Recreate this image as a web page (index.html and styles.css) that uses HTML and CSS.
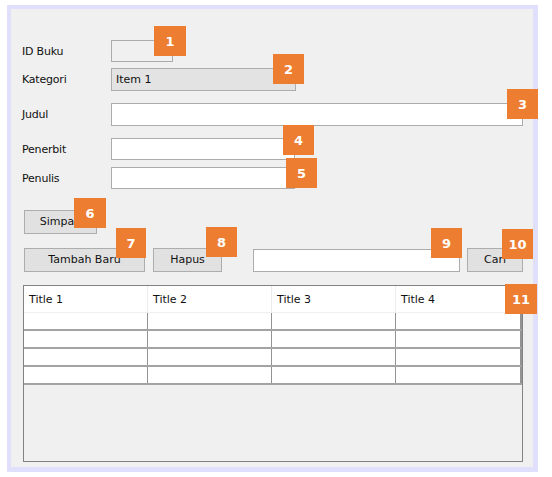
FILE: index.html
```html
<!DOCTYPE html>
<html>
<head>
<meta charset="utf-8">
<link rel="stylesheet" href="styles.css">
</head>
<body>
<div class="screen">
  <div class="frame">
    <div class="panel">
      <div class="form-row r-id">
        <span class="label">ID Buku</span>
        <div class="field field-id"></div>
      </div>
      <div class="form-row r-kat">
        <span class="label">Kategori</span>
        <div class="combo">Item 1</div>
      </div>
      <div class="form-row r-judul">
        <span class="label">Judul</span>
        <div class="field field-judul"></div>
      </div>
      <div class="form-row r-penerbit">
        <span class="label">Penerbit</span>
        <div class="field field-half"></div>
      </div>
      <div class="form-row r-penulis">
        <span class="label">Penulis</span>
        <div class="field field-half"></div>
      </div>
      <div class="btn-row r-simpan">
        <div class="btn btn-simpan">Simpan</div>
      </div>
      <div class="btn-row r-actions">
        <div class="btn btn-tambah">Tambah Baru</div>
        <div class="btn btn-hapus">Hapus</div>
        <div class="field field-search"></div>
        <div class="btn btn-cari">Cari</div>
      </div>
      <div class="table">
        <div class="thead">
          <div class="th">Title 1</div>
          <div class="th">Title 2</div>
          <div class="th">Title 3</div>
          <div class="th">Title 4</div>
        </div>
        <div class="tbody">
          <div class="tr"><div class="td"></div><div class="td"></div><div class="td"></div><div class="td"></div></div>
          <div class="tr"><div class="td"></div><div class="td"></div><div class="td"></div><div class="td"></div></div>
          <div class="tr"><div class="td"></div><div class="td"></div><div class="td"></div><div class="td"></div></div>
          <div class="tr"><div class="td"></div><div class="td"></div><div class="td"></div><div class="td"></div></div>
        </div>
      </div>
    </div>
  </div>
  <div class="badge b1">1</div>
  <div class="badge b2">2</div>
  <div class="badge b3">3</div>
  <div class="badge b4">4</div>
  <div class="badge b5">5</div>
  <div class="badge b6">6</div>
  <div class="badge b7">7</div>
  <div class="badge b8">8</div>
  <div class="badge b9">9</div>
  <div class="badge b10">10</div>
  <div class="badge b11">11</div>
</div>
</body>
</html>
```
FILE: styles.css
```css
* { box-sizing: border-box; }
html, body { margin: 0; padding: 0; background: #ffffff; }
body {
  font-family: "DejaVu Sans", Tahoma, sans-serif;
  font-size: 11px;
  color: #111111;
}
.screen { position: relative; width: 552px; height: 477px; padding: 5px 0 0 7px; }
.frame {
  width: 531px;
  height: 467px;
  border: 4px solid #e0e0fc;
  border-right-width: 5px;
  border-bottom-width: 5px;
  background: #f0f0f0;
}
.panel { padding: 31px 0 0 0; display: flex; flex-direction: column; }
.form-row { display: flex; align-items: center; padding-left: 11px; }
.label { width: 89px; letter-spacing: -0.2px; }
.r-kat { margin-top: 6px; }
.r-judul { margin-top: 12px; }
.r-penerbit { margin-top: 12px; }
.r-penulis { margin-top: 7px; }
.field {
  height: 22px;
  background: #ffffff;
  border: 1px solid #acacac;
}
.field-id { width: 62px; background: #f0f0f0; }
.field-judul { width: 412px; height: 23px; }
.field-half { width: 184px; }
.combo {
  width: 185px;
  height: 23px;
  background: #e3e3e3;
  border: 1px solid #adadad;
  padding-left: 4px;
  line-height: 21px;
}
.btn-row { display: flex; align-items: center; padding-left: 13px; }
.r-simpan { margin-top: 21px; }
.r-actions { margin-top: 14px; }
.btn {
  height: 24px;
  background: #e1e1e1;
  border: 1px solid #adadad;
  text-align: center;
  line-height: 22px;
}
.btn-simpan { width: 73px; }
.btn-tambah { width: 121px; }
.btn-hapus { width: 69px; margin-left: 8px; }
.field-search { width: 207px; height: 23px; margin-left: 31px; }
.btn-cari { width: 56px; margin-left: 7px; }
.table {
  margin: 13px 0 0 12px;
  width: 500px;
  height: 177px;
  border: 1px solid #828282;
  display: flex;
  flex-direction: column;
}
.thead {
  display: grid;
  grid-template-columns: 124px 124px 124px 126px;
  height: 27px;
  background: #ffffff;
  border-bottom: 1px solid #f0f0f0;
}
.th {
  padding-left: 5px;
  line-height: 27px;
  border-right: 1px solid #ececec;
}
.th:last-child { border-right: none; }
.tbody { width: 498px; }
.tr {
  display: grid;
  grid-template-columns: 124px 124px 124px 126px;
  height: 18px;
  background: #ffffff;
  border-bottom: 2px solid #a3a3a3;
}
.td { border-right: 1px solid #939393; }
.td:last-child { border-right: 2px solid #939393; }
.badge {
  position: absolute;
  width: 31px;
  height: 30px;
  background: #ed7d31;
  color: #ffffff;
  font-family: "DejaVu Sans", sans-serif;
  font-weight: 700;
  font-size: 13px;
  display: flex;
  align-items: center;
  justify-content: center;
}
.b1 { left: 154px; top: 26px; width: 32px; }
.b2 { left: 273px; top: 54px; }
.b3 { left: 507px; top: 89px; }
.b4 { left: 283px; top: 125px; }
.b5 { left: 286px; top: 158px; }
.b6 { left: 74px; top: 198px; width: 32px; }
.b7 { left: 116px; top: 228px; width: 30px; }
.b8 { left: 206px; top: 227px; }
.b9 { left: 431px; top: 228px; }
.b10 { left: 502px; top: 229px; }
.b11 { left: 505px; top: 284px; width: 32px; }
```
